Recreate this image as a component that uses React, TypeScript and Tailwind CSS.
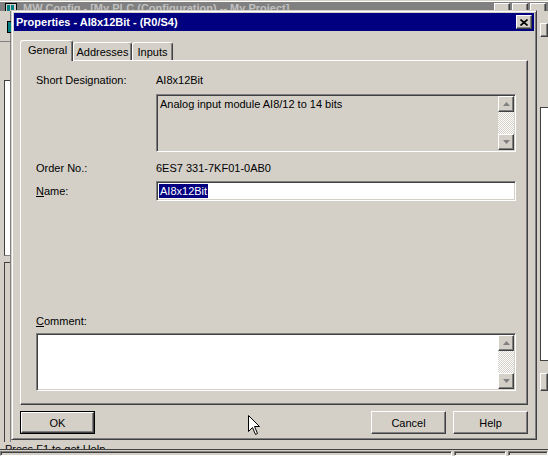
import type { ReactNode } from "react";

const btn =
  "bg-[#d4d0c8] border border-t-white border-l-white border-r-[#404040] border-b-[#404040] shadow-[inset_-1px_-1px_#808080]";
const sunken =
  "border border-t-[#808080] border-l-[#808080] border-r-white border-b-white shadow-[inset_1px_1px_#404040,inset_-1px_-1px_#d4d0c8]";
const checker =
  "bg-[image:repeating-conic-gradient(#ffffff_0%_25%,#d4d0c8_0%_50%)] bg-[length:2px_2px]";

const Arrow = ({ dir }: { dir: "up" | "down" }) => (
  <div className={`${btn} w-[16px] h-[16px] flex items-center justify-center shrink-0`}>
    <svg width="7" height="4" viewBox="0 0 7 4">
      {dir === "up" ? (
        <polygon points="3.5,0 7,4 0,4" fill="#808080" />
      ) : (
        <polygon points="0,0 7,0 3.5,4" fill="#808080" />
      )}
    </svg>
  </div>
);

const ScrollBar = () => (
  <div className="w-[16px] h-full flex flex-col shrink-0">
    <Arrow dir="up" />
    <div className={`flex-1 ${checker}`} />
    <Arrow dir="down" />
  </div>
);

const Button = ({ text, width, isDefault }: { text: string; width: string; isDefault?: boolean }) =>
  isDefault ? (
    <div className={`${width} h-[23px] border border-black`}>
      <div className={`${btn} w-full h-full flex items-center justify-center`}>{text}</div>
    </div>
  ) : (
    <div className={`${btn} ${width} h-[23px] flex items-center justify-center`}>{text}</div>
  );

const Row = ({ label, children }: { label: ReactNode; children?: ReactNode }) => (
  <div className="flex items-center">
    <div className="w-[120px] shrink-0">{label}</div>
    {children}
  </div>
);

const Tab = ({ text, width, active }: { text: string; width: string; active?: boolean }) =>
  active ? (
    <div className={`${width} h-[21px] bg-[#d4d0c8] border-t border-l border-t-white border-l-white border-r border-r-[#404040] shadow-[inset_-1px_0_#808080] rounded-t-[3px] pl-[7px] pt-[2px]`}>
      {text}
    </div>
  ) : (
    <div className={`${width} h-[18px] mb-[1px] bg-[#d4d0c8] border-t border-l border-t-white border-l-white border-r border-r-[#404040] shadow-[inset_-1px_0_#808080] rounded-t-[3px] flex justify-center pt-[2px]`}>
      {text}
    </div>
  );

const Cursor = () => (
  <svg className="absolute left-[248px] top-[415px]" width="13" height="21" viewBox="0 0 13 21">
    <path d="M0.5 0.5 L0.5 16.5 L4.5 12.5 L7.5 19.5 L9.5 18.5 L6.5 11.5 L11.5 11.5 Z" fill="white" stroke="black" strokeWidth="1" />
  </svg>
);

const App = () => {
  return (
    <div className="relative w-[548px] h-[456px] overflow-hidden bg-[#d4d0c8] font-['Liberation_Sans',Arial,sans-serif] text-[11px] leading-[14px] text-black flex flex-col">
      {/* application window behind the dialog */}
      <div className="h-[2px] border-b border-white" />
      <div className="h-[11px] bg-[#808080] flex items-start pl-[5px] gap-[6px] overflow-hidden">
        <div className="w-[12px] h-[10px] mt-[1px] bg-[#d4d0c8] border border-black flex gap-[1px] p-[1px]">
          <div className="w-[3px] bg-[#008080]" />
          <div className="w-[3px] bg-[#008080]" />
        </div>
        <span className="font-bold text-[#c0c0c0] leading-[11px] mt-[1px]">MW Config - [My PLC (Configuration) -- My Project]</span>
        <div className="ml-auto flex gap-[2px] pr-[2px] pt-[1px]">
          <div className={`${btn} w-[16px] h-[14px]`} />
          <div className={`${btn} w-[16px] h-[14px]`} />
          <div className={`${btn} w-[16px] h-[14px]`} />
        </div>
      </div>
      <div className="flex-1 flex">
        <div className="w-[11px] flex flex-col border-r border-[#808080]">
          <div className="mt-[10px] ml-[7px] w-[5px] h-[12px] border border-black bg-[#008080]" />
          <div className="mt-[8px] h-[1px] bg-[#808080]" />
          <div className="mt-[38px] ml-[4px] h-[176px] bg-white border border-t-[#404040] border-l-[#404040] border-r-0 border-b-[#808080]" />
          <div className="mt-[6px] ml-[4px] h-[180px] border-t border-l border-[#404040]" />
        </div>
        <div className="flex-1" />
        <div className="w-[11px] flex flex-col pl-[3px]">
          <div className={`${btn} mt-[12px] h-[14px]`} />
          <div className="mt-[70px] h-[254px] bg-white border border-[#404040] border-r-0" />
          <div className={`${btn} mt-[12px] h-[18px]`} />
        </div>
      </div>
      <div className="h-[17px] flex flex-col">
        <div className="h-[7px] overflow-hidden pl-[5px] leading-[14px]">Press F1 to get Help.</div>
        <div className="h-px bg-[#404040]" />
        <div className="flex-1 flex gap-[2px] pt-[1px]">
          <div className={`${sunken} flex-1`} />
          <div className={`${sunken} w-[52px]`} />
          <div className={`${sunken} w-[40px]`} />
        </div>
      </div>

      {/* Properties dialog */}
      <div className="absolute left-[11px] top-[10px] w-[526px] h-[430px] bg-[#d4d0c8] border border-t-[#d4d0c8] border-l-[#d4d0c8] border-r-[#404040] border-b-[#404040] shadow-[inset_1px_1px_#fff,inset_-1px_-1px_#808080] p-[2px] flex flex-col">
        <div className="h-[18px] bg-[#000080] flex items-center justify-between pl-[2px] pr-[2px]">
          <span className="font-bold text-white">Properties - AI8x12Bit - (R0/S4)</span>
          <div className={`${btn} w-[16px] h-[14px] flex items-center justify-center`}>
            <svg width="8" height="7" viewBox="0 0 8 7">
              <path d="M0.5 0.5 L7.5 6.5 M7.5 0.5 L0.5 6.5" stroke="black" strokeWidth="1.6" />
            </svg>
          </div>
        </div>

        <div className="flex-1 px-[6px] pt-[9px] flex flex-col">
          <div className="flex items-end h-[21px] -mb-px relative z-10">
            <Tab text="General" width="w-[53px]" active />
            <Tab text="Addresses" width="w-[59px]" />
            <Tab text="Inputs" width="w-[41px]" />
          </div>

          <div className="h-[345px] border-t border-l border-t-white border-l-white border-r border-b border-r-[#404040] border-b-[#404040] shadow-[inset_-1px_-1px_#808080] pl-[15px] pt-[12px] flex flex-col">
            <Row label="Short Designation:">AI8x12Bit</Row>
            <div className={`${sunken} ml-[120px] mt-[7px] w-[360px] h-[58px] p-[1px] flex bg-[#d4d0c8]`}>
              <div className="flex-1 pl-[2px] pt-[1px]">Analog input module AI8/12 to 14 bits</div>
              <ScrollBar />
            </div>
            <div className="mt-[9px]">
              <Row label="Order No.:">6ES7 331-7KF01-0AB0</Row>
            </div>
            <div className="mt-[6px]">
              <Row label={<><span className="underline">N</span>ame:</>}>
                <div className={`${sunken} w-[360px] h-[20px] bg-white flex items-center pl-[2px]`}>
                  <span className="bg-[#000080] text-white px-px">AI8x12Bit</span>
                </div>
              </Row>
            </div>
            <div className="mt-[113px]">
              <span className="underline">C</span>omment:
            </div>
            <div className={`${sunken} mt-[5px] w-[480px] h-[58px] p-[1px] flex bg-white`}>
              <div className="flex-1" />
              <ScrollBar />
            </div>
          </div>

          <div className="mt-[6px] flex gap-[7px]">
            <Button text="OK" width="w-[75px]" isDefault />
            <div className="flex-1" />
            <Button text="Cancel" width="w-[75px]" />
            <Button text="Help" width="w-[75px]" />
          </div>
        </div>
      </div>

      <Cursor />
    </div>
  );
};

export default App;
